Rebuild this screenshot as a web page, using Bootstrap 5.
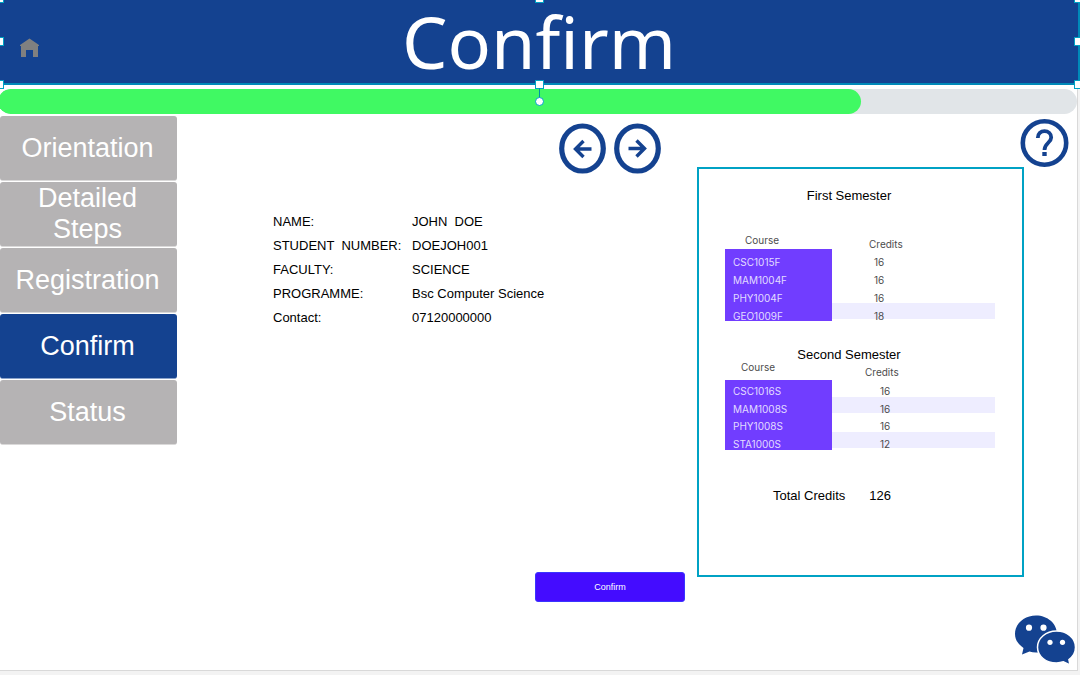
<!DOCTYPE html>
<html lang="en">
<head>
<meta charset="utf-8">
<meta name="viewport" content="width=device-width, initial-scale=1">
<title>Confirm</title>
<link href="https://cdn.jsdelivr.net/npm/bootstrap@5.3.0/dist/css/bootstrap.min.css" rel="stylesheet">
<style>
:root { --navy: #144290; --teal: #00a2c4; }
body { background: #f3f3f3; color: #000; font: 13px/24px "Liberation Sans", Arial, sans-serif; overflow-x: hidden; }
.banner { background: var(--navy); height: 85px; border-bottom: 2px solid #0089b8; border-right: 2px solid #0089b8; }
.banner h1 { font: 400 72px/82px "Noto Sans", sans-serif; font-variant-ligatures: none; }
.home-link { left: 20px; top: 38px; line-height: 0; }
.grip { position: absolute; width: 9px; height: 9px; background: #fff; border: 1px solid var(--teal); z-index: 3; }
.grip-l { left: -5px; } .grip-c { left: calc(50% - 4px); } .grip-r { right: -5px; }
.grip-t { top: -6px; } .grip-m { top: 37px; } .grip-b { top: 80px; }
.grip-turn { top: 97px; border-radius: 50%; }
.grip-stem { position: absolute; left: 50%; top: 88px; width: 1px; height: 10px; background: #008fa8; z-index: 3; }
.sheet { background: #fff; margin: 0 2px 4px 0; border: solid #d9d9d9; border-width: 0 1px 1px 0; }
.progress { height: 25px; margin: 4px 0 0 -2px; border-radius: 13px; background: #e1e5e8; }
.progress-bar { background: #40f963; border-radius: 13px; }
.steps { width: 177px; gap: 1px; margin-top: 2px; }
.steps .btn { height: 65px; padding: 0 10px 0 8px; border: 0; border-bottom: 1px solid #dad9d9; border-radius: 3px; background: #b5b3b4; color: #fff; font-size: 27px; line-height: 31px; }
.steps .btn.active { background: var(--navy); border-color: #8ba3cb; color: #fff; }
.arrows { padding: 9px 36px 0 0; gap: 8px; }
.icon-btn { border: 0; padding: 0; background: none; line-height: 0; }
.details { margin: 36px 0 0 96px; }
.details th { width: 139px; font-weight: 400; }
.details td, .details th { padding: 0; white-space: pre; }
.confirm-btn { width: 150px; height: 30px; margin: 242px 12px 0 0; padding: 0; border: 1px solid #3a35ff; border-radius: 3px; background: #440cff; color: #fff; font-size: 9px; line-height: 28px; }
.confirm-btn:hover { background: #3a08dd; color: #fff; }
.summary { width: 380px; padding-top: 5px; }
.panel { width: 327px; height: 410px; border: 2px solid var(--teal); padding: 20px 27px 0 26px; }
.panel h2 { font-size: 13px; line-height: 14px; font-weight: 400; margin: 0; padding-right: 22px; }
.panel .second-title { margin-top: 27px; }
.courses { width: 100%; font: 10px/10px Inter, sans-serif; color: #4c4c4c; }
.courses th, .courses td { padding: 0; vertical-align: bottom; font-weight: 400; }
.courses thead th:first-child { vertical-align: top; width: 107px; padding-left: 20px; }
.courses tbody tr { height: 18px; }
.courses tbody th { background: #713dff; color: #e2dcff; padding-left: 8px; }
.courses .tinted td { background: linear-gradient(#eeedff, #eeedff) top / 100% 16px no-repeat; }
.first { margin-top: 32px; }
.first thead { height: 14px; }
.first thead th:last-child { padding-left: 37px; }
.first td { padding-left: 42px; }
.second thead { height: 18px; }
.second thead th:first-child { padding-left: 16px; }
.second thead th:last-child { padding: 0 0 3px 33px; }
.second tbody th, .second tbody td { padding-bottom: 1px; }
.second td { padding-left: 48px; }
.second tbody tr:nth-child(odd) { height: 17px; }
.total { margin: 39px 0 0 48px; gap: 24px; line-height: 14px; }
.chat { margin: 13px 2px 5px 0; }
</style>
</head>
<body class="d-flex flex-column min-vh-100">
<header class="banner position-relative flex-shrink-0">
  <h1 class="text-white text-center m-0">Confirm</h1>
  <a class="home-link position-absolute" href="#" aria-label="Home">
    <svg width="20" height="20" viewBox="0 0 20 20" fill="#808080"><path d="M9.500 .5 19 7v1h-1v11h-5v-7H6v7H1V8H0V7z"/></svg>
  </a>
  <span class="grip grip-l grip-t"></span><span class="grip grip-c grip-t"></span><span class="grip grip-r grip-t"></span>
  <span class="grip grip-l grip-m"></span><span class="grip grip-r grip-m"></span>
  <span class="grip grip-l grip-b"></span><span class="grip grip-c grip-b"></span><span class="grip grip-r grip-b"></span>
  <span class="grip-stem"></span><span class="grip grip-c grip-turn"></span>
</header>

<div class="sheet flex-grow-1 d-flex flex-column">
  <div class="progress" role="progressbar" aria-label="Registration progress" aria-valuenow="80" aria-valuemin="0" aria-valuemax="100">
    <div class="progress-bar" style="width: 80%"></div>
  </div>

  <div class="d-flex align-items-start">
    <nav class="steps d-flex flex-column flex-shrink-0">
      <button type="button" class="btn">Orientation</button>
      <button type="button" class="btn">Detailed Steps</button>
      <button type="button" class="btn">Registration</button>
      <button type="button" class="btn active" aria-current="step">Confirm</button>
      <button type="button" class="btn">Status</button>
    </nav>

    <main class="flex-grow-1 d-flex flex-column">
      <div class="arrows d-flex justify-content-end">
        <button type="button" class="icon-btn" aria-label="Previous">
          <svg width="47" height="51" viewBox="0 0 47 51" fill="none" stroke="#144290"><ellipse cx="23.500" cy="25.500" rx="20.800" ry="22.500" stroke-width="5.200"/><path d="M32.500 26H17M24.500 18 16.500 26l8 8" stroke-width="3.400"/></svg>
        </button>
        <button type="button" class="icon-btn" aria-label="Next">
          <svg width="47" height="51" viewBox="0 0 47 51" fill="none" stroke="#144290"><ellipse cx="23.500" cy="25.500" rx="20.800" ry="22.500" stroke-width="5.200"/><path d="M14.500 25.500H30.500M22.500 17.500l8 8-8 8" stroke-width="3.400"/></svg>
        </button>
      </div>
      <table class="details">
        <tbody>
          <tr><th scope="row">NAME:</th><td>JOHN  DOE</td></tr>
          <tr><th scope="row">STUDENT  NUMBER:</th><td>DOEJOH001</td></tr>
          <tr><th scope="row">FACULTY:</th><td>SCIENCE</td></tr>
          <tr><th scope="row">PROGRAMME:</th><td>Bsc Computer Science</td></tr>
          <tr><th scope="row">Contact:</th><td>07120000000</td></tr>
        </tbody>
      </table>
      <button type="button" class="confirm-btn btn align-self-end">Confirm</button>
    </main>

    <aside class="summary flex-shrink-0">
      <div class="d-flex justify-content-end pe-2">
        <button type="button" class="icon-btn" aria-label="Help">
          <svg width="49" height="48" viewBox="0 0 49 48" fill="none" stroke="#144290"><circle cx="24.500" cy="24" r="21.700" stroke-width="4.600"/><path d="M17.800 19c0-4.200 3-6.900 6.700-6.900s6.700 2.700 6.700 6.400c0 5-6.700 5.800-6.700 12.500" stroke-width="3.800"/><path d="M24.500 33v4" stroke-width="4.400"/></svg>
        </button>
      </div>
      <section class="panel">
        <h2 class="text-center">First Semester</h2>
        <table class="courses first">
          <thead><tr><th scope="col">Course</th><th scope="col">Credits</th></tr></thead>
          <tbody>
            <tr><th scope="row">CSC1015F</th><td>16</td></tr>
            <tr><th scope="row">MAM1004F</th><td>16</td></tr>
            <tr><th scope="row">PHY1004F</th><td>16</td></tr>
            <tr class="tinted"><th scope="row">GEO1009F</th><td>18</td></tr>
          </tbody>
        </table>
        <h2 class="second-title text-center">Second Semester</h2>
        <table class="courses second">
          <thead><tr><th scope="col">Course</th><th scope="col">Credits</th></tr></thead>
          <tbody>
            <tr><th scope="row">CSC1016S</th><td>16</td></tr>
            <tr class="tinted"><th scope="row">MAM1008S</th><td>16</td></tr>
            <tr><th scope="row">PHY1008S</th><td>16</td></tr>
            <tr class="tinted"><th scope="row">STA1000S</th><td>12</td></tr>
          </tbody>
        </table>
        <div class="total d-flex"><span>Total Credits</span><span>126</span></div>
      </section>
    </aside>
  </div>

  <footer class="mt-auto d-flex justify-content-end">
    <button type="button" class="icon-btn chat" aria-label="Chat">
      <svg width="60" height="50" viewBox="0 0 60 50">
        <path fill="#144290" d="M21 .5c11.500 0 21 8 21 18.500s-9.500 18.500-21 18.500c-2.300 0-4.500-.4-6.500-1L7 39.500 8.500 33C3.500 29.800 0 25 0 19 0 8.500 9.500.5 21 .5z"/>
        <path fill="#144290" stroke="#fff" stroke-width="1.500" d="M41.500 16C52 16 60.500 23 60.500 32.200c0 5-2.600 9.400-6.600 12.300L55 50l-6.600-3.200c-2.100.8-4.500 1.200-6.900 1.200C31 48 22.500 41.200 22.500 32.200S31 16 41.500 16z"/>
        <g fill="#fff"><circle cx="14" cy="12.700" r="3.100"/><circle cx="28.500" cy="12.700" r="3.100"/><circle cx="35" cy="27.300" r="2.600"/><circle cx="47.500" cy="27.300" r="2.600"/></g>
      </svg>
    </button>
  </footer>
</div>
<script src="https://cdn.jsdelivr.net/npm/bootstrap@5.3.0/dist/js/bootstrap.bundle.min.js"></script>
</body>
</html>
